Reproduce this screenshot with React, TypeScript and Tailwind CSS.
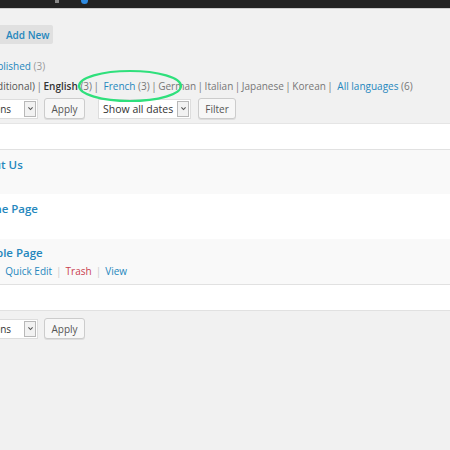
import React from "react";

const link = "text-[#2587bd]";

function Chevron() {
  return (
    <svg viewBox="0 0 10 10" className="h-[7px] w-[7px]">
      <path d="M2 3.5 L5 6.5 L8 3.5" fill="none" stroke="#555" strokeWidth="1.6" />
    </svg>
  );
}

function SelectBox({ label, className, textClass }: { label: string; className: string; textClass: string }) {
  return (
    <div className={`flex h-[20px] items-center justify-between overflow-hidden border border-[#ddd] bg-white pr-[1px] ${className}`}>
      <span className={`whitespace-nowrap text-[#333] ${textClass}`}>{label}</span>
      <span className="flex h-[16px] w-[12px] shrink-0 items-center justify-center border border-[#b8b8b8] bg-[#f2f2f2]">
        <Chevron />
      </span>
    </div>
  );
}

function Button({ children, className = "" }: { children: React.ReactNode; className?: string }) {
  return (
    <button className={`h-[21px] rounded-[3px] border border-[#ccc] bg-[#f7f7f7] text-[10px] text-[#555] shadow-[0_1px_0_#ddd] ${className}`}>
      {children}
    </button>
  );
}

function Sep() {
  return <span className="mx-[1.5px] text-[#777]">|</span>;
}

export default function App() {
  return (
    <div className="relative h-[450px] w-[450px] overflow-hidden bg-[#f1f1f1] font-['Open_Sans',sans-serif] text-[10px] leading-[14px] text-[#555]">
      {/* admin bar */}
      <div className="flex h-[9px] items-start border-b border-[#ccc] bg-[#222]">
        <span className="ml-[55px] h-[3px] w-[4px] bg-[#888]" />
        <span className="ml-[22px] h-[4px] w-[7px] rounded-b-full bg-[#2e8ae0]" />
      </div>

      <div className="mt-[16px] flex">
        <button className={`h-[19px] w-[53px] rounded-r-[2px] bg-[#e0e0e0] pl-[6px] text-left text-[10px] font-semibold ${link}`}>
          Add New
        </button>
      </div>

      <div className="mt-[15px] h-[14px] whitespace-nowrap">
        <span className="-ml-[15px]">
          <span className={link}>Published</span> <span className="text-[#999]">(3)</span>
        </span>
      </div>

      <div className="mt-[6px] h-[14px] whitespace-nowrap">
        <span className="-ml-[21px]">(Traditional)</span>
        <Sep />
        <span className="font-semibold text-[#333]">English</span> <span className="text-[#777]">(3)</span>
        <Sep />
        <span className={`ml-[3px] ${link}`}>French</span> <span className="text-[#777]">(3)</span>
        <Sep />
        <span className="text-[#777]">German</span>
        <Sep />
        <span className="text-[#777]">Italian</span>
        <Sep />
        <span className="text-[#777]">Japanese</span>
        <Sep />
        <span className="text-[#777]">Korean</span>
        <Sep />
        <span className={`ml-[3px] ${link}`}>All languages</span> <span className="text-[#777]">(6)</span>
      </div>

      <div className="mt-[5px] flex items-center">
        <SelectBox label="Bulk Actions" className="-ml-[60px] w-[98px]" textClass="pl-[13px]" />
        <Button className="ml-[6px] w-[41px]">Apply</Button>
        <SelectBox label="Show all dates" className="ml-[13px] w-[93px] text-[10.5px]" textClass="pl-[4px]" />
        <Button className="ml-[7px] w-[38px]">Filter</Button>
      </div>

      {/* table */}
      <div className="mt-[4px] border-t border-[#e5e5e5] bg-white">
        <div className="h-[26px] border-b border-[#e1e1e1]" />
        <div className="h-[44px] bg-[#f9f9f9] pt-[8px]">
          <div className={`-ml-[28px] whitespace-nowrap text-[11.5px] font-semibold ${link}`}>About Us</div>
        </div>
        <div className="h-[45px] bg-white pt-[8px]">
          <div className={`-ml-[25px] whitespace-nowrap text-[11.5px] font-semibold ${link}`}>Home Page</div>
        </div>
        <div className="h-[45px] bg-[#f9f9f9] pt-[7px]">
          <div className={`-ml-[28px] whitespace-nowrap text-[11.5px] font-semibold ${link}`}>Sample Page</div>
          <div className="mt-[4px] -ml-[26px] whitespace-nowrap">
            <span className={link}>Edit</span>
            <span className="mx-[4px] text-[#ccc]">|</span>
            <span className={link}>Quick Edit</span>
            <span className="mx-[4px] text-[#ccc]">|</span>
            <span className="text-[#c9414f]">Trash</span>
            <span className="mx-[4px] text-[#ccc]">|</span>
            <span className={link}>View</span>
          </div>
        </div>
        <div className="h-[27px] border-y border-[#e1e1e1] bg-white" />
      </div>

      <div className="mt-[7px] flex items-center">
        <SelectBox label="Bulk Actions" className="-ml-[60px] w-[98px]" textClass="pl-[13px]" />
        <Button className="ml-[6px] w-[41px]">Apply</Button>
      </div>

      {/* highlight */}
      <svg className="pointer-events-none absolute left-[76px] top-[68px]" width="108" height="36" viewBox="0 0 108 36">
        <ellipse cx="54" cy="18" rx="51" ry="15" fill="none" stroke="#2fe07c" strokeWidth="2.2" />
      </svg>
    </div>
  );
}
